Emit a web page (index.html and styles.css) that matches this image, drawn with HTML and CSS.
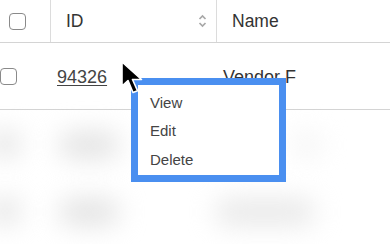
FILE: index.html
```html
<!DOCTYPE html>
<html lang="en">
<head>
  <meta charset="UTF-8">
  <title>Vendors</title>
  <link rel="stylesheet" href="styles.css">
</head>
<body>

<div class="table">
  <div class="head">
    <div class="cell check-cell"><span class="box"></span></div>
    <div class="cell">
      ID
      <svg class="sort" width="9" height="16" viewBox="0 0 9 16">
        <path d="M1.5 6 L4.5 3 L7.5 6" fill="none" stroke="#a8a8a8" stroke-width="1.7"/>
        <path d="M1.5 10 L4.5 13 L7.5 10" fill="none" stroke="#a8a8a8" stroke-width="1.7"/>
      </svg>
    </div>
    <div class="cell">Name</div>
  </div>

  <div class="row">
    <div class="cell check-cell"><span class="box"></span></div>
    <div class="cell"><a href="#" class="id-link">94326</a></div>
    <div class="cell">Vendor F</div>
  </div>

  <div class="row blurred">
    <div class="cell check-cell"><span class="blob small"></span></div>
    <div class="cell"><span class="blob mid"></span></div>
    <div class="cell"><span class="blob faint"></span></div>
  </div>

  <div class="row blurred">
    <div class="cell check-cell"><span class="blob small"></span></div>
    <div class="cell"><span class="blob mid"></span></div>
    <div class="cell"><span class="blob wide"></span></div>
  </div>
</div>

<!-- context menu -->
<ul class="menu">
  <li>View</li>
  <li>Edit</li>
  <li>Delete</li>
</ul>

<svg class="cursor" width="26" height="40" viewBox="0 0 26 40">
  <path d="M1 1 L1 25 L7 19.5 L12 31.5 L16.5 29.8 L11.5 18.5 L20.5 18.5 Z" fill="#000" stroke="#fff" stroke-width="1.6" stroke-linejoin="round"/>
</svg>

</body>
</html>
```

FILE: styles.css
```css
body {
  margin: 0;
  font-family: "Liberation Sans", Arial, sans-serif;
  color: #333;
  background: #fff;
  overflow: hidden;
}

.table {
  width: 390px;
}

.head,
.row {
  display: grid;
  grid-template-columns: 51px 166px 1fr;
}

.head {
  height: 42px;
  border-bottom: 1px solid #d4d4d4;
}

.head .cell {
  display: flex;
  align-items: center;
  padding-left: 15px;
  border-right: 1px solid #dcdcdc;
  font-size: 17.5px;
}

.head .cell:last-child {
  border-right: none;
}

.head .check-cell {
  padding-left: 9px;
}

.sort {
  margin-left: auto;
  margin-right: 9px;
}

.row {
  height: 66px;
  border-bottom: 1px solid #d4d4d4;
}

.row .cell {
  display: flex;
  align-items: center;
  padding-left: 6px;
  padding-top: 2px;
  font-size: 18px;
}

.row .check-cell {
  padding-left: 0;
  padding-top: 0;
}

.box {
  display: block;
  width: 15px;
  height: 15px;
  border: 1.5px solid #8a8a8a;
  border-radius: 4px;
  background: #fff;
}

.id-link {
  color: #444;
  text-decoration: underline;
  text-underline-offset: 2px;
}

.row.blurred {
  border-bottom: none;
  height: 67px;
}

.blob {
  display: block;
  height: 26px;
  border-radius: 13px;
  background: #e2e2e2;
  filter: blur(13px);
}

.blob.small {
  width: 30px;
  margin-left: -10px;
}

.blob.mid {
  width: 60px;
  margin-left: 2px;
}

.blob.wide {
  width: 100px;
  margin-left: -8px;
  background: #e8e8e8;
}

.blob.faint {
  width: 28px;
  margin-left: 70px;
  background: #f3f3f3;
}

.menu {
  position: absolute;
  left: 131px;
  top: 78px;
  width: 155px;
  height: 104px;
  box-sizing: border-box;
  margin: 0;
  padding: 4px 12px 2px;
  list-style: none;
  background: #fff;
  border: 7px solid #4a8ff0;
}

.menu li {
  font-size: 15px;
  line-height: 28.3px;
  color: #444;
}

.cursor {
  position: absolute;
  left: 121px;
  top: 61px;
}
```
